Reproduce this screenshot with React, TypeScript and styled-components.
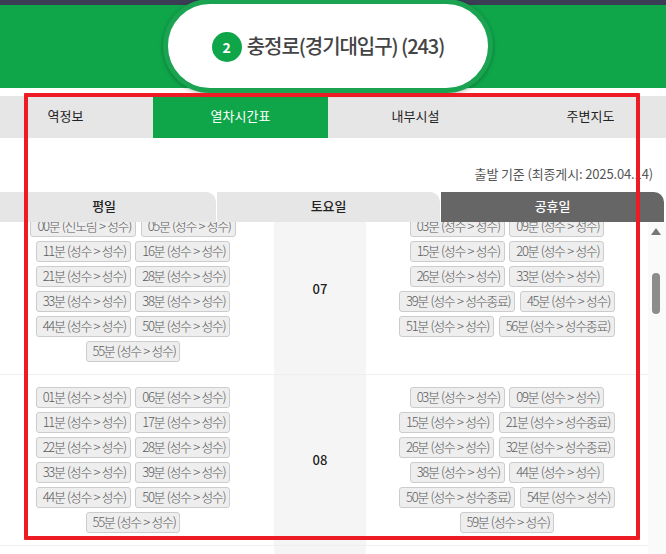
import React from "react";
import styled, { createGlobalStyle } from "styled-components";

const Global = createGlobalStyle`
  html, body { margin: 0; padding: 0; background: #fff; overflow: hidden; }
  body { font-family: "Noto Sans CJK KR", "Noto Sans", sans-serif; }
`;

const Page = styled.div`
  position: relative;
  width: 666px;
  height: 554px;
  overflow: hidden;
  background: #fff;
`;
const TopBar = styled.div`
  height: 5px;
  background: #3a3d54;
`;
const Header = styled.header`
  height: 83px;
  background: #0fa64a;
`;
const Pill = styled.div`
  position: absolute;
  left: 163px;
  top: -1px;
  width: 330px;
  height: 94px;
  box-sizing: border-box;
  border: 5px solid #1aa350;
  border-radius: 47px;
  background: #fff;
  box-shadow: 0 1px 4px rgba(0, 0, 0, 0.3);
  display: flex;
  align-items: center;
  justify-content: center;
  gap: 5px;
  padding-top: 1px;
`;
const Badge = styled.span`
  width: 30px;
  height: 30px;
  border-radius: 50%;
  background: #0fa64a;
  color: #fff;
  font-size: 14px;
  font-weight: 700;
  display: flex;
  align-items: center;
  justify-content: center;
`;
const Title = styled.h1`
  margin: 0 0 2px;
  font-size: 20px;
  font-weight: 500;
  letter-spacing: -1.05px;
  color: #444;
`;
const Tabs = styled.nav`
  display: flex;
  margin: 8px 0 0 -22px;
  width: 700px;
  height: 42px;
  background: #e6e6e6;
`;
const Tab = styled.div<{ $active?: boolean }>`
  width: 175px;
  box-sizing: border-box;
  padding-bottom: 3px;
  display: flex;
  align-items: center;
  justify-content: center;
  font-size: 13px;
  letter-spacing: 0;
  color: ${(p) => (p.$active ? "#fff" : "#222")};
  background: ${(p) => (p.$active ? "#0fa64a" : "transparent")};
`;
const Note = styled.div`
  height: 54px;
  box-sizing: border-box;
  display: flex;
  align-items: flex-end;
  justify-content: flex-end;
  padding: 0 13px 9px 0;
  font-size: 13px;
  letter-spacing: -0.14px;
  line-height: 18px;
  color: #555;
`;
const DayTabs = styled.div`
  display: flex;
  gap: 1px;
  margin-left: -8px;
  height: 30px;
`;
const DayTab = styled.div<{ $active?: boolean; $w: number }>`
  width: ${(p) => p.$w}px;
  flex: none;
  box-sizing: border-box;
  padding-bottom: 3px;
  display: flex;
  align-items: center;
  justify-content: center;
  border-top-right-radius: 10px;
  font-size: 13px;
  font-weight: 500;
  letter-spacing: -0.2px;
  color: ${(p) => (p.$active ? "#fff" : "#222")};
  background: ${(p) => (p.$active ? "#666" : "#e6e6e6")};
`;
const Body = styled.div`
  display: flex;
  height: 332px;
  overflow: hidden;
`;
const Table = styled.div`
  width: 656px;
  margin: -18px 0 0 -8px;
  flex: none;
`;
const Row = styled.div<{ $h?: number }>`
  display: grid;
  grid-template-columns: 282px 92px 282px;
  border-bottom: 1px solid #eee;
  height: ${(p) => p.$h ?? 170}px;
`;
const Cell = styled.div`
  display: flex;
  flex-wrap: wrap;
  justify-content: center;
  align-content: flex-start;
  gap: 4px 4.6px;
  padding: 12px 0;
`;
const Hour = styled.div`
  background: #f5f5f5;
  box-sizing: border-box;
  padding-bottom: 2px;
  display: flex;
  align-items: center;
  justify-content: center;
  font-size: 13px;
  font-weight: 500;
  color: #222;
`;
const Chip = styled.span`
  box-sizing: border-box;
  height: 21px;
  line-height: 18px;
  padding: 0 4px 0 6px;
  border: 1px solid #ccc;
  border-radius: 3px;
  background: #eee;
  color: #5c5c5c;
  font-size: 13px;
  font-weight: 300;
  letter-spacing: -1.3px;
  word-spacing: 0.8px;
  white-space: nowrap;
`;
const Scrollbar = styled.div`
  width: 18px;
  flex: none;
  box-sizing: border-box;
  padding-right: 3px;
  background: #fafafa;
  display: flex;
  flex-direction: column;
  align-items: center;
`;
const Arrow = styled.div`
  margin-top: 6px;
  width: 0;
  height: 0;
  border-left: 5px solid transparent;
  border-right: 5px solid transparent;
  border-bottom: 7px solid #777;
`;
const Thumb = styled.div`
  margin-top: 38px;
  width: 8px;
  height: 41px;
  border-radius: 4px;
  background: #8c8c8c;
`;
const Frame = styled.div`
  position: absolute;
  left: 24px;
  top: 93px;
  width: 616px;
  height: 447px;
  box-sizing: border-box;
  border: 4px solid #ed1c24;
  border-radius: 1px;
  pointer-events: none;
`;

const mk = (s: string) => s.split(",");
const E = "(성수 > 성수)";
const label = (m: string) => {
  if (m.endsWith("e")) return `${m.slice(0, -1)}분 (성수 > 성수종료)`;
  if (m.endsWith("s")) return `${m.slice(0, -1)}분 (신노림 > 성수)`;
  return `${m}분 ${E}`;
};
const rows = [
  {
    hour: "07",
    left: mk("00s,05,11,16,21,28,33,38,44,50,55"),
    right: mk("03,09,15,20,26,33,39e,45,51,56e"),
  },
  {
    hour: "08",
    left: mk("01,06,11,17,22,28,33,39,44,50,55"),
    right: mk("03,09,15,21e,26,32e,38,44,50e,54,59"),
  },
];

export default function App() {
  return (
    <Page>
      <Global />
      <TopBar />
      <Header />
      <Pill>
        <Badge>2</Badge>
        <Title>충정로(경기대입구) (243)</Title>
      </Pill>
      <Tabs>
        <Tab>역정보</Tab>
        <Tab $active>열차시간표</Tab>
        <Tab>내부시설</Tab>
        <Tab>주변지도</Tab>
      </Tabs>
      <Note>출발 기준 (최종게시: 2025.04.14)</Note>
      <DayTabs>
        <DayTab $w={224}>평일</DayTab>
        <DayTab $w={223}>토요일</DayTab>
        <DayTab $w={223} $active>공휴일</DayTab>
      </DayTabs>
      <Body>
        <Table>
          {rows.map((r) => (
            <Row key={r.hour}>
              <Cell>{r.left.map((m) => <Chip key={m}>{label(m)}</Chip>)}</Cell>
              <Hour>{r.hour}</Hour>
              <Cell>{r.right.map((m) => <Chip key={m}>{label(m)}</Chip>)}</Cell>
            </Row>
          ))}
          <Row $h={40}>
            <Cell />
            <Hour />
            <Cell />
          </Row>
        </Table>
        <Scrollbar>
          <Arrow />
          <Thumb />
        </Scrollbar>
      </Body>
      <Frame />
    </Page>
  );
}
